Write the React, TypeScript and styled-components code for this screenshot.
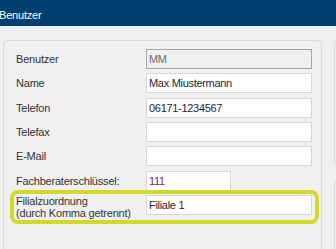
import styled, { createGlobalStyle } from "styled-components";

const GlobalStyle = createGlobalStyle`
  html, body {
    margin: 0;
    padding: 0;
  }
  body {
    background: #f0f0f0;
    font-family: "Liberation Sans", Arial, sans-serif;
    overflow: hidden;
  }
`;

const Window = styled.div`
  width: 336px;
  height: 249px;
  overflow: hidden;
  background: #f0f0f0;
`;

const TitleBar = styled.div`
  height: 26px;
  box-sizing: border-box;
  padding-top: 4px;
  display: flex;
  align-items: center;
  background: #003f72;
  color: #ffffff;
  font-size: 11px;
  letter-spacing: -0.2px;
`;

const TitleText = styled.span`
  margin-left: -1px;
`;

const Body = styled.div`
  display: flex;
  align-items: flex-start;
  gap: 12px;
  padding: 14px 0 0 3px;
`;

const GroupBox = styled.div`
  flex-shrink: 0;
  width: 319px;
  height: 240px;
  box-sizing: border-box;
  border: 1px solid #dadada;
  border-radius: 4px;
  padding: 8px 9px 0 12px;
`;

const Rows = styled.div`
  display: flex;
  flex-direction: column;
  gap: 4.33px;
`;

const Row = styled.div`
  display: flex;
  align-items: center;
  height: 20px;
`;

const HighlightRow = styled.div`
  position: relative;
  display: flex;
  align-items: flex-start;
  border: 4px solid #d3d92a;
  border-radius: 8px;
  padding: 1px 3px 1px 2px;
  margin: -5px -7px 0 -6px;
`;

const Label = styled.div<{ $multi?: boolean }>`
  flex-shrink: 0;
  width: 130px;
  font-size: 11px;
  line-height: ${(p) => (p.$multi ? "12px" : "normal")};
  letter-spacing: -0.2px;
  color: #333333;
`;

const Field = styled.input<{ $width?: number; $locked?: boolean; $accent?: boolean }>`
  box-sizing: border-box;
  width: ${(p) => p.$width ?? 166}px;
  height: 20px;
  margin: 0;
  padding: 0 1px 0 2px;
  border: 1px solid ${(p) => (p.$locked ? "#a6a6a6" : "#d6d6d6")};
  background: ${(p) => (p.$locked ? "#f0f0f0" : "#ffffff")};
  color: ${(p) => (p.$locked ? "#6d6d6d" : p.$accent ? "#6a2a72" : "#222833")};
  font-family: "Liberation Sans", Arial, sans-serif;
  font-size: 11px;
  letter-spacing: -0.3px;
  outline: none;
`;

const SideColumn = styled.div`
  display: flex;
  flex-direction: column;
  gap: 15px;
  margin-top: 1px;
`;

const SidePanel = styled.div<{ $height: number }>`
  width: 30px;
  height: ${(p) => p.$height}px;
  border: 1px solid #dadada;
  border-right: none;
  border-radius: 4px 0 0 4px;
`;

const fields = [
  { label: "Benutzer", value: "MM", locked: true },
  { label: "Name", value: "Max Miustermann" },
  { label: "Telefon", value: "06171-1234567" },
  { label: "Telefax", value: "" },
  { label: "E-Mail", value: "" },
  { label: "Fachberaterschlüssel:", value: "111", width: 85, accent: true },
];

export default function App() {
  return (
    <Window>
      <GlobalStyle />
      <TitleBar>
        <TitleText>Benutzer</TitleText>
      </TitleBar>
      <Body>
        <GroupBox>
          <Rows>
            {fields.map((f) => (
              <Row key={f.label}>
                <Label>{f.label}</Label>
                <Field
                  readOnly
                  value={f.value}
                  $width={f.width}
                  $locked={f.locked}
                  $accent={f.accent}
                />
              </Row>
            ))}
            <HighlightRow>
              <Label $multi>
                Filialzuordnung
                <br />
                (durch Komma getrennt)
              </Label>
              <Field readOnly value="Filiale 1" />
            </HighlightRow>
          </Rows>
        </GroupBox>
        <SideColumn>
          <SidePanel $height={123} />
          <SidePanel $height={80} />
        </SideColumn>
      </Body>
    </Window>
  );
}
